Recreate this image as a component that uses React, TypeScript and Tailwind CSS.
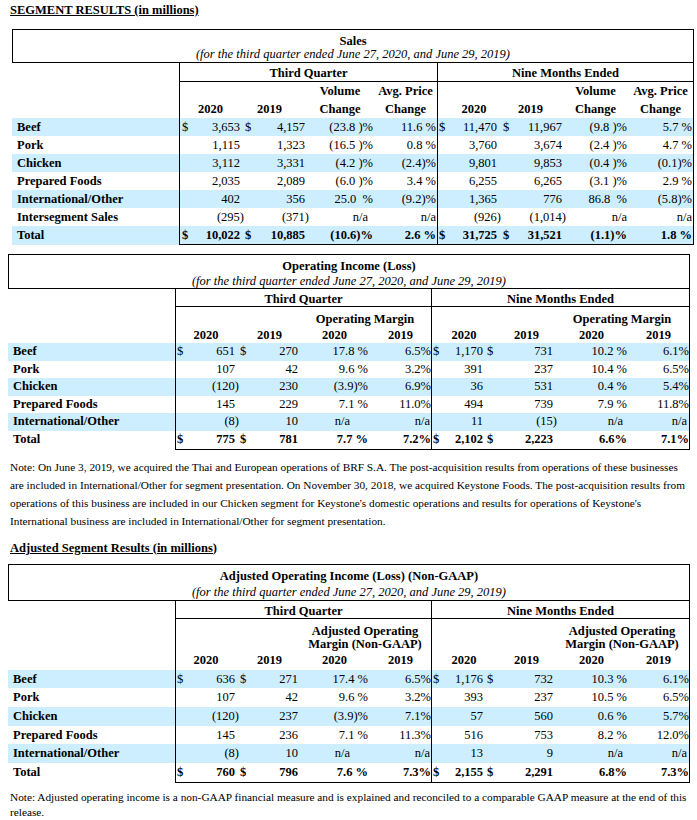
import React from "react";

type R = { l: string; c: string[]; b?: boolean; t?: boolean };

const T1G = "grid grid-cols-[167px_9px_53px_12px_53px_68px_64px_9px_51px_12px_53px_65px_66px]";
const T2G = "grid grid-cols-[167px_10px_51px_15px_48px_71px_62px_13px_39px_14px_57px_73px_62px]";

const T1C = [
  "border-l border-black pl-[2px]",
  "text-right pr-[1px]",
  "pl-[4px]",
  "text-right pr-[1px]",
  "text-right pr-[1px]",
  "text-right pr-[1px] border-r border-black",
  "pl-[1px]",
  "text-right pr-[1px]",
  "pl-[5px]",
  "text-right pr-[1px]",
  "text-right pr-[1px]",
  "text-right pr-[1px] border-r border-black",
];
const T1NA: Record<number, string> = {
  4: "text-right pr-[6px]",
};

const T2C = [
  "border-l border-black pl-[1px]",
  "text-right pr-[1px]",
  "pl-[4px]",
  "text-right pr-[1px]",
  "text-right pr-[2px]",
  "text-right border-r border-black",
  "pl-[1px]",
  "text-right pr-[1px]",
  "pl-[3px]",
  "text-right pr-[2px]",
  "text-right pr-[1px]",
  "text-right border-r border-black",
];
const T2NA: Record<number, string> = {
  4: "text-right pr-[20px]",
  5: "text-right pr-[1px] border-r border-black",
  10: "text-right pr-[5px]",
  11: "text-right pr-[2px] border-r border-black",
};

const t1Rows: R[] = [
  { l: "Beef", b: true, c: ["$", "3,653", "$", "4,157", "(23.8 )%", "11.6 %", "$", "11,470", "$", "11,967", "(9.8 )%", "5.7 %"] },
  { l: "Pork", c: ["", "1,115", "", "1,323", "(16.5 )%", "0.8 %", "", "3,760", "", "3,674", "(2.4 )%", "4.7 %"] },
  { l: "Chicken", b: true, c: ["", "3,112", "", "3,331", "(4.2 )%", "(2.4)%", "", "9,801", "", "9,853", "(0.4 )%", "(0.1)%"] },
  { l: "Prepared Foods", c: ["", "2,035", "", "2,089", "(6.0 )%", "3.4 %", "", "6,255", "", "6,265", "(3.1 )%", "2.9 %"] },
  { l: "International/Other", b: true, c: ["", "402", "", "356", "25.0  %", "(9.2)%", "", "1,365", "", "776", "86.8  %", "(5.8)%"] },
  { l: "Intersegment Sales", c: ["", "(295)", "", "(371)", "n/a", "n/a", "", "(926)", "", "(1,014)", "n/a", "n/a"] },
  { l: "Total", b: true, t: true, c: ["$", "10,022", "$", "10,885", "(10.6)%", "2.6 %", "$", "31,725", "$", "31,521", "(1.1)%", "1.8 %"] },
];

const t2Rows: R[] = [
  { l: "Beef", b: true, c: ["$", "651", "$", "270", "17.8 %", "6.5%", "$", "1,170", "$", "731", "10.2 %", "6.1%"] },
  { l: "Pork", c: ["", "107", "", "42", "9.6 %", "3.2%", "", "391", "", "237", "10.4 %", "6.5%"] },
  { l: "Chicken", b: true, c: ["", "(120)", "", "230", "(3.9)%", "6.9%", "", "36", "", "531", "0.4 %", "5.4%"] },
  { l: "Prepared Foods", c: ["", "145", "", "229", "7.1 %", "11.0%", "", "494", "", "739", "7.9 %", "11.8%"] },
  { l: "International/Other", b: true, c: ["", "(8)", "", "10", "n/a", "n/a", "", "11", "", "(15)", "n/a", "n/a"] },
  { l: "Total", t: true, c: ["$", "775", "$", "781", "7.7 %", "7.2%", "$", "2,102", "$", "2,223", "6.6%", "7.1%"] },
];

const t3Rows: R[] = [
  { l: "Beef", b: true, c: ["$", "636", "$", "271", "17.4 %", "6.5%", "$", "1,176", "$", "732", "10.3 %", "6.1%"] },
  { l: "Pork", c: ["", "107", "", "42", "9.6 %", "3.2%", "", "393", "", "237", "10.5 %", "6.5%"] },
  { l: "Chicken", b: true, c: ["", "(120)", "", "237", "(3.9)%", "7.1%", "", "57", "", "560", "0.6 %", "5.7%"] },
  { l: "Prepared Foods", c: ["", "145", "", "236", "7.1 %", "11.3%", "", "516", "", "753", "8.2 %", "12.0%"] },
  { l: "International/Other", b: true, c: ["", "(8)", "", "10", "n/a", "n/a", "", "13", "", "9", "n/a", "n/a"] },
  { l: "Total", t: true, c: ["$", "760", "$", "796", "7.6 %", "7.3%", "$", "2,155", "$", "2,291", "6.8%", "7.3%"] },
];

const NUMCOLS = [1, 3, 7, 9];

function DataRows({
  rows,
  grid,
  cls,
  na,
  lead,
}: {
  rows: R[];
  grid: string;
  cls: string[];
  na: Record<number, string>;
  lead: string;
}) {
  return (
    <>
      {rows.map((r, ri) => {
        const last = ri === rows.length - 1;
        return (
          <div key={r.l} className={`${grid} ${lead} ${r.b ? "bg-[#cceeff]" : ""}`}>
            <div className="pl-[5px] font-bold whitespace-nowrap">{r.l}</div>
            {r.c.map((v, i) => {
              let c = cls[i];
              if (v === "n/a" && na[i]) c = na[i];
              const paren = NUMCOLS.includes(i) && v.startsWith("(");
              return (
                <div
                  key={i}
                  className={`${c} whitespace-pre ${r.t ? "font-bold" : ""} ${last ? "border-b border-black" : ""}`}
                >
                  {paren ? <span className="inline-block mr-[-4px]">{v}</span> : v}
                </div>
              );
            })}
          </div>
        );
      })}
    </>
  );
}

export default function App() {
  return (
    <div className="font-['Liberation_Serif','Times_New_Roman',serif] text-black bg-white w-[697px] min-h-[820px] text-[12.5px]">
      <div className="pt-[3px] pl-[10px] leading-[15px] font-bold underline">SEGMENT RESULTS (in millions)</div>

      {/* Table 1: Sales */}
      <div className="mt-[11px] ml-[12px] w-[682px]">
        <div className="border border-black pt-[5px] pb-[1px] text-center">
          <div className="font-bold leading-[13px]">Sales</div>
          <div className="italic leading-[13px]">(for the third quarter ended June 27, 2020, and June 29, 2019)</div>
        </div>
        <div className={`${T1G} font-bold text-center`}>
          <div></div>
          <div className="col-span-6 border-l border-r border-b border-black pt-[3px] leading-[15px]">Third Quarter</div>
          <div className="col-span-6 border-r border-b border-black pt-[3px] leading-[15px]">Nine Months Ended</div>
        </div>
        <div className={`${T1G} font-bold text-center leading-[18px]`}>
          <div></div>
          <div className="col-span-2 border-l border-black flex items-end justify-center">2020</div>
          <div className="col-span-2 flex items-end justify-center pr-[8px]">2019</div>
          <div className="flex flex-col justify-end">
            <div>Volume</div>
            <div>Change</div>
          </div>
          <div className="flex flex-col justify-end border-r border-black">
            <div>Avg. Price</div>
            <div>Change</div>
          </div>
          <div className="col-span-2 flex items-end justify-center pl-[12px]">2020</div>
          <div className="col-span-2 flex items-end justify-center">2019</div>
          <div className="flex flex-col justify-end">
            <div>Volume</div>
            <div>Change</div>
          </div>
          <div className="flex flex-col justify-end border-r border-black">
            <div>Avg. Price</div>
            <div>Change</div>
          </div>
        </div>
        <DataRows rows={t1Rows} grid={T1G} cls={T1C} na={T1NA} lead="leading-[18px]" />
      </div>

      {/* Table 2: Operating Income */}
      <div className="mt-[9px] ml-[8px] w-[682px]">
        <div className="border border-black pt-[3px] text-center">
          <div className="font-bold leading-[16px]">Operating Income (Loss)</div>
          <div className="italic leading-[14px]">(for the third quarter ended June 27, 2020, and June 29, 2019)</div>
        </div>
        <div className={`${T2G} font-bold text-center`}>
          <div></div>
          <div className="col-span-6 border-l border-r border-b border-black pt-[4px] leading-[13px]">Third Quarter</div>
          <div className="col-span-6 border-r border-b border-black pt-[4px] leading-[13px]">Nine Months Ended</div>
        </div>
        <div className={`${T2G} font-bold text-center`}>
          <div></div>
          <div className="col-span-4 border-l border-black h-[20px]"></div>
          <div className="col-span-2 border-r border-black pt-[4px] leading-[16px]">Operating Margin</div>
          <div className="col-span-4 h-[20px]"></div>
          <div className="col-span-2 border-r border-black pt-[4px] leading-[16px]">Operating Margin</div>
        </div>
        <div className={`${T2G} font-bold text-center leading-[16px]`}>
          <div></div>
          <div className="col-span-2 border-l border-black">2020</div>
          <div className="col-span-2 pl-[4px]">2019</div>
          <div>2020</div>
          <div className="border-r border-black">2019</div>
          <div className="col-span-2 pl-[12px]">2020</div>
          <div className="col-span-2 pl-[14px]">2019</div>
          <div>2020</div>
          <div className="border-r border-black">2019</div>
        </div>
        <DataRows rows={t2Rows} grid={T2G} cls={T2C} na={T2NA} lead="leading-[17.6px]" />
      </div>

      <div className="mt-[8px] px-[10px] text-[11.3px] leading-[18px] whitespace-nowrap">
        Note: On June 3, 2019, we acquired the Thai and European operations of BRF S.A. The post-acquisition results from operations of these businesses
        <br />
        are included in International/Other for segment presentation. On November 30, 2018, we acquired Keystone Foods. The post-acquisition results from
        <br />
        operations of this business are included in our Chicken segment for Keystone&apos;s domestic operations and results for operations of Keystone&apos;s
        <br />
        International business are included in International/Other for segment presentation.
      </div>

      <div className="mt-[10px] pl-[10px] leading-[16px] font-bold underline">Adjusted Segment Results (in millions)</div>

      {/* Table 3: Adjusted Operating Income */}
      <div className="mt-[8px] ml-[8px] w-[682px]">
        <div className="border border-black pt-[3px] text-center">
          <div className="font-bold leading-[16px]">Adjusted Operating Income (Loss) (Non-GAAP)</div>
          <div className="italic leading-[16px]">(for the third quarter ended June 27, 2020, and June 29, 2019)</div>
        </div>
        <div className={`${T2G} font-bold text-center`}>
          <div></div>
          <div className="col-span-6 border-l border-r border-b border-black pt-[4px] leading-[13px]">Third Quarter</div>
          <div className="col-span-6 border-r border-b border-black pt-[4px] leading-[13px]">Nine Months Ended</div>
        </div>
        <div className={`${T2G} font-bold text-center`}>
          <div></div>
          <div className="col-span-4 border-l border-black h-[32px]"></div>
          <div className="col-span-2 border-r border-black pt-[6px] leading-[13px] h-[32px]">
            <div>Adjusted Operating</div>
            <div>Margin (Non-GAAP)</div>
          </div>
          <div className="col-span-4 h-[32px]"></div>
          <div className="col-span-2 border-r border-black pt-[6px] leading-[13px] h-[32px]">
            <div>Adjusted Operating</div>
            <div>Margin (Non-GAAP)</div>
          </div>
        </div>
        <div className={`${T2G} font-bold text-center leading-[19px]`}>
          <div></div>
          <div className="col-span-2 border-l border-black">2020</div>
          <div className="col-span-2 pl-[4px]">2019</div>
          <div>2020</div>
          <div className="border-r border-black">2019</div>
          <div className="col-span-2 pl-[12px]">2020</div>
          <div className="col-span-2 pl-[14px]">2019</div>
          <div>2020</div>
          <div className="border-r border-black">2019</div>
        </div>
        <DataRows rows={t3Rows} grid={T2G} cls={T2C} na={T2NA} lead="leading-[18.7px]" />
      </div>

      <div className="mt-[7px] px-[10px] text-[11.3px] leading-[15px] whitespace-nowrap">
        Note: Adjusted operating income is a non-GAAP financial measure and is explained and reconciled to a comparable GAAP measure at the end of this
        <br />
        release.
      </div>
    </div>
  );
}
